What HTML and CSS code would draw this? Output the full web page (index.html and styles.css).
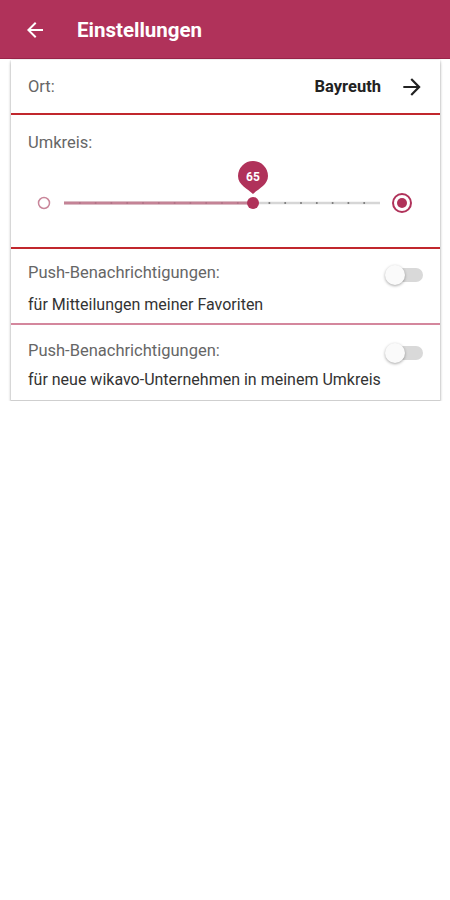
FILE: index.html
```html
<!DOCTYPE html>
<html lang="de">
<head>
  <meta charset="UTF-8" />
  <meta name="viewport" content="width=device-width, initial-scale=1.0" />
  <title>Einstellungen</title>
  <link rel="stylesheet" href="styles.css">
</head>
<body>
  <header class="toolbar">
    <svg class="back" width="24" height="24" viewBox="0 0 24 24">
      <path d="M20 11H7.83l5.59-5.59L12 4l-8 8 8 8 1.41-1.41L7.83 13H20v-2z" fill="#fff"/>
    </svg>
    <h1>Einstellungen</h1>
  </header>

  <div class="card">
    <div class="row-ort">
      <span class="label">Ort:</span>
      <span class="place">
        <strong>Bayreuth</strong>
        <svg width="26" height="26" viewBox="0 0 24 24">
          <path d="M12 4l-1.41 1.41L16.17 11H4v2h12.17l-5.58 5.59L12 20l8-8z" fill="#222"/>
        </svg>
      </span>
    </div>

    <div class="section-radius">
      <div class="label">Umkreis:</div>
      <svg class="slider" width="429" height="80" viewBox="0 0 429 80">
        <circle cx="33" cy="50" r="5.5" fill="none" stroke="#c9869a" stroke-width="1.5"/>
        <line x1="53" y1="50" x2="369" y2="50" stroke="#d6d6d6" stroke-width="2.5"/>
        <line x1="53" y1="50" x2="242" y2="50" stroke="#c48396" stroke-width="3"/>
        <g fill="#777" id="ticks"></g>
        <path d="M242 41 C237 36 227 32 227 23 A15 15 0 0 1 257 23 C257 32 247 36 242 41 Z" fill="#b0325a"/>
        <text x="242" y="27.5" text-anchor="middle" class="bubble">65</text>
        <circle cx="242" cy="50" r="6" fill="#b0325a"/>
        <circle cx="391" cy="50" r="9" fill="none" stroke="#b0325a" stroke-width="2"/>
        <circle cx="391" cy="50" r="5" fill="#b0325a"/>
      </svg>
    </div>

    <div class="row-push first">
      <div class="push-head">
        <span class="label">Push-Benachrichtigungen:</span>
        <span class="switch"></span>
      </div>
      <div class="sub">für Mitteilungen meiner Favoriten</div>
    </div>

    <div class="row-push second">
      <div class="push-head">
        <span class="label">Push-Benachrichtigungen:</span>
        <span class="switch"></span>
      </div>
      <div class="sub">für neue wikavo-Unternehmen in meinem Umkreis</div>
    </div>
  </div>

  <script>
    // tick marks along the slider track
    const ticks = document.getElementById("ticks");
    for (let i = 1; i < 20; i++) {
      const x = 53 + i * 15.8;
      const dot = document.createElementNS("http://www.w3.org/2000/svg", "circle");
      dot.setAttribute("cx", x);
      dot.setAttribute("cy", 50);
      dot.setAttribute("r", 1);
      if (x < 242) dot.setAttribute("fill", "#b07386");
      ticks.appendChild(dot);
    }
  </script>
</body>
</html>
```

FILE: styles.css
```css
body {
  margin: 0;
  font-family: Roboto, "Liberation Sans", sans-serif;
  background: #fff;
  color: #333;
}
.toolbar {
  height: 59px;
  background: #b0325a;
  border-bottom: 1px solid #9a2449;
  display: flex;
  align-items: center;
  padding-left: 23px;
  box-sizing: border-box;
}
.toolbar h1 {
  margin: 2px 0 0 30px;
  font-size: 20.5px;
  font-weight: 700;
  color: #fff;
}
.back {
  margin-top: 2px;
}
.card {
  margin: 1px 10px 0 11px;
  background: #fff;
  border-bottom: 1px solid #cfcfcf;
  box-shadow: 0 2px 3px rgba(0, 0, 0, 0.3), 0 0 2px rgba(0, 0, 0, 0.15);
}
.label {
  font-size: 16.5px;
  color: #666;
  line-height: 20px;
}
.row-ort {
  height: 53px;
  display: flex;
  align-items: center;
  justify-content: space-between;
  padding: 0 15px 0 17px;
  border-bottom: 2px solid #c1272d;
}
.place {
  display: flex;
  align-items: center;
  gap: 18px;
}
.place strong {
  font-size: 16.5px;
  color: #222;
}
.section-radius {
  padding: 18px 0 14px;
  border-bottom: 2px solid #c1272d;
}
.section-radius .label {
  padding-left: 17px;
}
.slider {
  display: block;
}
.bubble {
  font-family: Roboto, "Liberation Sans", sans-serif;
  font-size: 12px;
  font-weight: 700;
  fill: #fff;
}
.row-push {
  padding: 14px 17px 8px;
}
.row-push.first {
  border-bottom: 2px solid #d4879d;
}
.row-push.second {
  padding-top: 16px;
  padding-bottom: 10px;
}
.push-head {
  display: flex;
  justify-content: space-between;
  align-items: center;
}
.sub {
  font-size: 16px;
  line-height: 20px;
  color: #333;
  margin-top: 12px;
}
.row-push.second .sub {
  margin-top: 9px;
}
.switch {
  position: relative;
  width: 30px;
  height: 14px;
  border-radius: 7px;
  background: #d9d9d9;
  margin-top: 4px;
}
.switch::before {
  content: "";
  position: absolute;
  left: -8px;
  top: -3px;
  width: 20px;
  height: 20px;
  border-radius: 50%;
  background: #fafafa;
  box-shadow: 0 1px 3px rgba(0, 0, 0, 0.35);
}
```
